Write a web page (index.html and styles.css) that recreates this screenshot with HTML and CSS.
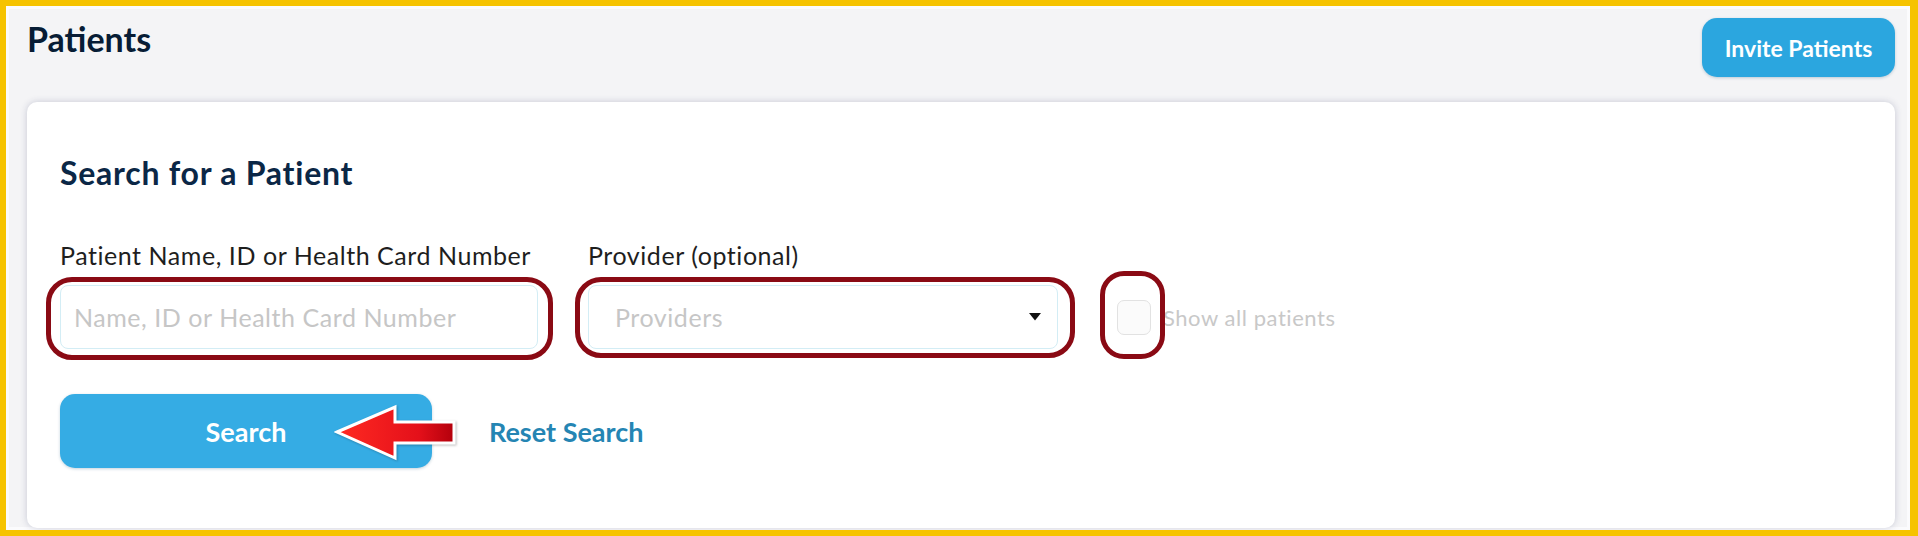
FILE: index.html
```html
<!DOCTYPE html>
<html lang="en">
<head>
<meta charset="utf-8">
<title>Patients</title>
<link rel="stylesheet" href="styles.css">
</head>
<body>
<div class="frame">
  <header class="topbar">
    <h1 class="page-title">Patients</h1>
    <button class="btn btn-invite" type="button">Invite Patients</button>
  </header>

  <section class="card">
    <h2 class="card-title">Search for a Patient</h2>

    <div class="fields">
      <div class="field field-name">
        <label class="field-label" for="q">Patient Name, ID or Health Card Number</label>
        <div class="control">
          <input id="q" class="text-input" type="text" placeholder="Name, ID or Health Card Number">
          <span class="ring ring-name"></span>
        </div>
      </div>

      <div class="field field-provider">
        <label class="field-label">Provider (optional)</label>
        <div class="control">
          <div class="select">
            <span class="select-placeholder">Providers</span>
            <svg class="caret" width="12" height="8" viewBox="0 0 12 8"><path d="M0 0 H12 L6 7.5 Z" fill="#111"/></svg>
          </div>
          <span class="ring ring-provider"></span>
        </div>
      </div>

      <div class="check-row">
        <span class="checkbox">
          <span class="ring ring-check"></span>
        </span>
        <span class="check-label">Show all patients</span>
      </div>
    </div>

    <div class="actions">
      <div class="search-wrap">
        <button class="btn btn-search" type="button">Search</button>
        <svg class="arrow" width="124" height="60" viewBox="0 0 124 60">
          <defs>
            <linearGradient id="ag" x1="0" y1="0" x2="1" y2="0">
              <stop offset="0" stop-color="#ff2a22"/>
              <stop offset="0.7" stop-color="#e4101a"/>
              <stop offset="1" stop-color="#b3000c"/>
            </linearGradient>
          </defs>
          <polygon points="3,29 61,4 61,19 120,19 120,40 61,40 61,55" fill="url(#ag)" stroke="#fff" stroke-width="3" stroke-linejoin="miter"/>
        </svg>
      </div>
      <a class="reset-link" href="#">Reset Search</a>
    </div>
  </section>
</div>
</body>
</html>
```

FILE: styles.css
```css
* { box-sizing: border-box; }

html, body {
  margin: 0;
  padding: 0;
  background: #f5f5f7;
}

body {
  font-family: "Lato", "Open Sans", "Liberation Sans", sans-serif;
}

.frame {
  width: 1918px;
  height: 536px;
  overflow: hidden;
  border-style: solid;
  border-color: #f6c300;
  border-width: 6px 8px 6px 6px;
  background: #f4f4f6;
  box-shadow: inset 0 0 0 3px #fbfbfd;
  padding: 12px 15px 0 21px;
}

.topbar {
  display: flex;
  justify-content: space-between;
  align-items: flex-start;
  height: 84px;
}

.page-title {
  margin: 0;
  font-size: 34px;
  line-height: 41px;
  font-weight: 700;
  color: #071c35;
}

.btn {
  border: 0;
  font-family: inherit;
  font-weight: 700;
  color: #fff;
  cursor: pointer;
}

.btn-invite {
  width: 193px;
  height: 59px;
  border-radius: 15px;
  background: #2ba6df;
  font-size: 23px;
  padding: 0;
  box-shadow: 0 1px 3px rgba(20, 80, 120, 0.25);
}

.card {
  background: #fff;
  border-radius: 10px;
  box-shadow: 0 0 7px rgba(40, 50, 100, 0.22);
  padding: 52px 33px 60px 33px;
}

.card-title {
  margin: 0;
  font-size: 32px;
  line-height: 38px;
  font-weight: 700;
  letter-spacing: 0.75px;
  color: #0b2746;
}

.fields {
  display: flex;
  align-items: flex-end;
  margin-top: 49px;
}

.field {
  display: flex;
  flex-direction: column;
}

.field-name { width: 478px; }
.field-provider { width: 470px; margin-left: 50px; }

.field-label {
  font-size: 25px;
  line-height: 29px;
  letter-spacing: 0.55px;
  color: #1e1e1e;
  margin-bottom: 15px;
  white-space: nowrap;
}

.control {
  position: relative;
  height: 64px;
}

.text-input {
  width: 100%;
  height: 64px;
  border: 1px solid #d3edf5;
  border-radius: 8px;
  padding: 0 13px;
  font-family: inherit;
  font-size: 25px;
  letter-spacing: 0.55px;
  color: #333;
  background: #fff;
  outline: none;
}

.text-input::placeholder {
  color: #c6c6c6;
}

.select {
  height: 64px;
  border: 1px solid #d3edf5;
  border-radius: 8px;
  display: flex;
  align-items: center;
  justify-content: space-between;
  padding: 0 16px 0 26px;
  background: #fff;
}

.select-placeholder {
  font-size: 25px;
  letter-spacing: 0.55px;
  color: #c6c6c6;
}

.caret { display: block; }

.ring {
  position: absolute;
  border: 5px solid #8a0a14;
  pointer-events: none;
}

.ring-name {
  left: -14px;
  right: -15px;
  top: -8px;
  bottom: -11px;
  border-radius: 26px;
}

.ring-provider {
  left: -13px;
  right: -17px;
  top: -8px;
  bottom: -9px;
  border-radius: 26px;
}

.check-row {
  display: flex;
  align-items: center;
  height: 64px;
  margin-left: 59px;
}

.checkbox {
  position: relative;
  width: 34px;
  height: 35px;
  border: 1.5px solid #e2e2e2;
  border-radius: 7px;
  background: #fbfbfb;
}

.ring-check {
  left: -18px;
  right: -15px;
  top: -30px;
  bottom: -25px;
  border-radius: 24px;
}

.check-label {
  margin-left: 12px;
  font-size: 22px;
  letter-spacing: 0.55px;
  color: #c8c8c8;
}

.actions {
  display: flex;
  align-items: center;
  margin-top: 45px;
}

.search-wrap {
  position: relative;
}

.btn-search {
  display: block;
  width: 372px;
  height: 74px;
  border-radius: 15px;
  background: #35ace4;
  font-size: 27px;
  box-shadow: 0 1px 3px rgba(20, 80, 120, 0.25);
}

.arrow {
  position: absolute;
  left: 274px;
  top: 9px;
  filter: drop-shadow(1px 1px 1px rgba(0, 0, 0, 0.25));
}

.reset-link {
  margin-left: 57px;
  font-size: 27px;
  font-weight: 700;
  color: #2585b3;
  text-decoration: none;
}
```
